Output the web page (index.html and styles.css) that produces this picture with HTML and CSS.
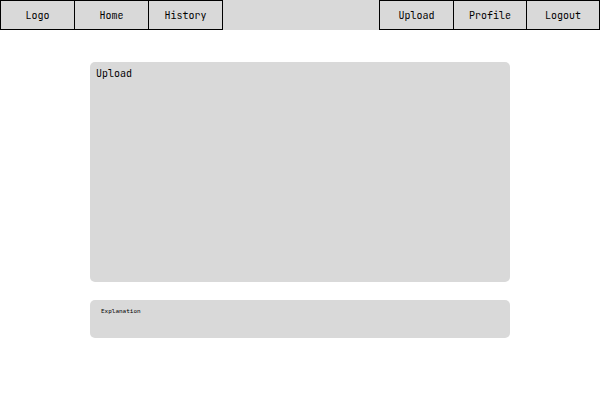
FILE: index.html
```html
<!DOCTYPE html>
<html lang="en">
<head>
<meta charset="utf-8">
<meta name="viewport" content="width=device-width, initial-scale=1">
<title>Upload</title>
<link rel="stylesheet" href="styles.css">
</head>
<body>
<header>
  <nav class="navbar">
    <div class="nav-group">
      <a class="nav-link" href="#">Logo</a>
      <a class="nav-link" href="#">Home</a>
      <a class="nav-link" href="#">History</a>
    </div>
    <div class="nav-group nav-account">
      <a class="nav-link" href="#">Upload</a>
      <a class="nav-link" href="#">Profile</a>
      <a class="nav-link" href="#">Logout</a>
    </div>
  </nav>
</header>
<main class="content">
  <section class="panel upload">
    <h1 class="title">Upload</h1>
  </section>
  <section class="panel explanation">
    <p class="note">Explanation</p>
  </section>
</main>
</body>
</html>
```
FILE: styles.css
```css
* {
  box-sizing: border-box;
}

body {
  margin: 0;
  background: #fff;
  color: #000;
  font-family: "JetBrains Mono", "DejaVu Sans Mono", "Liberation Mono", monospace;
  font-size: 10px;
  line-height: 14px;
}

.navbar {
  display: flex;
  justify-content: space-between;
  background: #d9d9d9;
}

.nav-group {
  display: flex;
}

.nav-link {
  width: 75px;
  padding: 8px 0 6px;
  border: 1px solid #000;
  color: inherit;
  text-align: center;
  text-decoration: none;
}

.nav-link + .nav-link {
  margin-left: -1px;
}

.nav-account .nav-link + .nav-link {
  width: 74px;
}

.content {
  display: flex;
  flex-direction: column;
  gap: 18px;
  width: 70%;
  margin: 32px auto;
}

.panel {
  border-radius: 5px;
  background: #d9d9d9;
}

.upload {
  min-height: 220px;
  padding: 5px 6px;
}

.explanation {
  min-height: 38px;
  padding: 7px 11px;
}

.title {
  margin: 0;
  font-size: 10px;
  font-weight: 400;
}

.note {
  margin: 0;
  font-size: 6px;
  line-height: 8px;
}
```
